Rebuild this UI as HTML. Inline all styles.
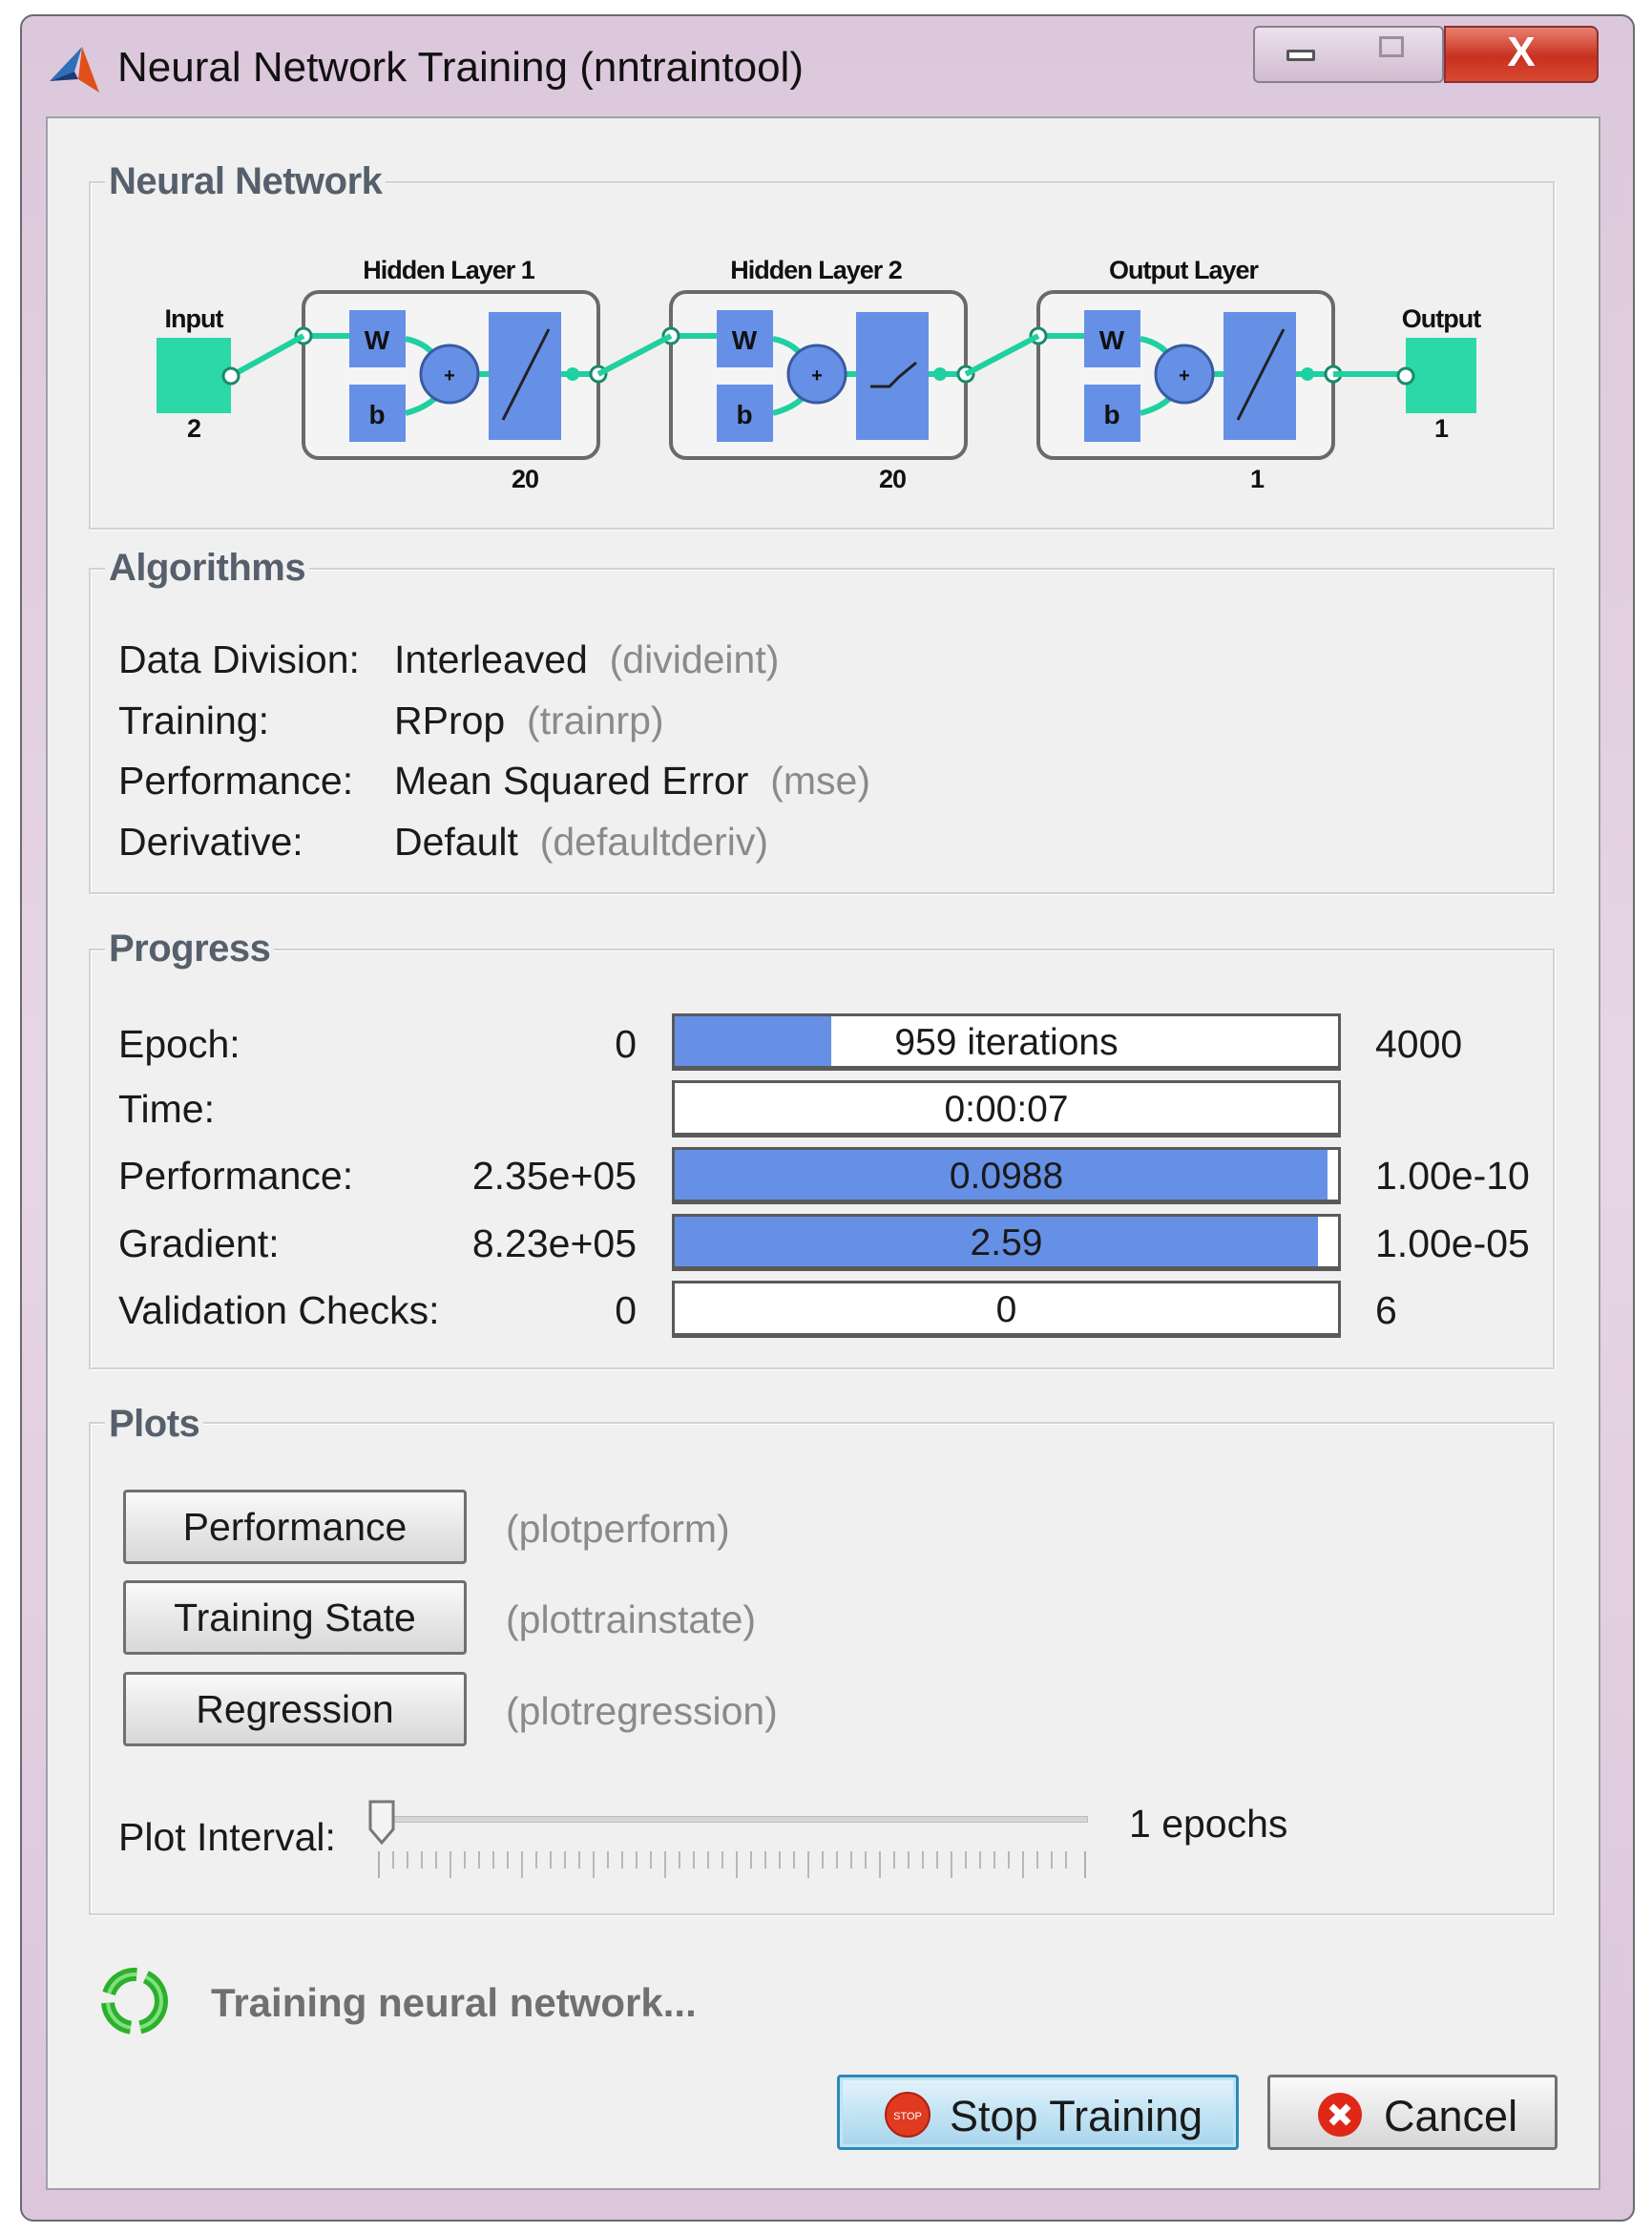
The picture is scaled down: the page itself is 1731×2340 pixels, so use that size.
<!DOCTYPE html>
<html><head><meta charset="utf-8"><style>
*{margin:0;padding:0;box-sizing:border-box}
body{width:1731px;height:2340px;background:#fff;position:relative;overflow:hidden;font-family:"Liberation Sans",sans-serif;color:#1a1a1a}
.a{position:absolute;white-space:nowrap}
.win{position:absolute;left:21px;top:15px;width:1692px;height:2313px;border:2px solid #6a6a70;border-radius:14px;background:linear-gradient(#dcc8dc,#e6d6e6 50%,#dcc6dc)}
.client{position:absolute;left:48px;top:122px;width:1629px;height:2173px;background:#f0f0f0;border:2px solid #a0a0a8}
.grp{position:absolute;border:2px solid #d2d2d2;box-shadow:inset 1px 1px 0 #fff,1px 1px 0 #fff}
.gl{position:absolute;background:#f0f0f0;color:#56606c;font-size:40px;font-weight:bold;letter-spacing:-0.5px;padding:0 4px;line-height:40px}
.t{font-size:41px;letter-spacing:0;line-height:40px}
.g{color:#8a8a8a}
.bar{position:absolute;left:704px;width:701px;height:60px;background:#fff;border:3px solid #5a5a5a;border-bottom-width:5px}
.fill{position:absolute;left:0;top:0;bottom:0;background:#6690e6}
.bt{position:absolute;left:50%;top:8px;transform:translateX(-50%);font-size:39px;line-height:40px}
.btn{position:absolute;left:129px;width:360px;height:78px;border:3px solid #707070;border-radius:4px;background:linear-gradient(#fafafa,#e8e8e8 50%,#d8d8d8);font-size:41px;text-align:center;line-height:72px}
</style></head><body>
<div class="win"></div>
<svg class="a" style="left:48px;top:45px" width="60" height="60" viewBox="0 0 60 60"><path d="M4 40 L30 30 L38 4 Z" fill="#2f6fb8"/><path d="M38 4 L56 52 L34 38 Z" fill="#e0501a"/><path d="M4 40 L30 30 L34 38 Z" fill="#1c3c78"/></svg>
<div class="a" style="left:123px;top:46px;font-size:44px;color:#111">Neural Network Training (nntraintool)</div>
<div class="a" style="left:1313px;top:27px;width:200px;height:60px;border:2px solid #8a7f90;border-radius:6px;background:linear-gradient(#ece0ec,#d0bcd0)"></div>
<div class="a" style="left:1348px;top:52px;width:30px;height:12px;border:3px solid #555;border-radius:2px;background:#fff"></div>
<div class="a" style="left:1445px;top:38px;width:26px;height:22px;border:3px solid #9a8fa0"></div>
<div class="a" style="left:1513px;top:27px;width:162px;height:60px;border:2px solid #8a3030;border-radius:0 8px 8px 0;background:linear-gradient(#e88070,#c83020 55%,#d84a30);color:#fff;font-size:44px;font-weight:bold;text-align:center;line-height:52px">X</div>
<div class="client"></div>

<div class="grp" style="left:93px;top:190px;width:1536px;height:365px"></div>
<div class="gl" style="left:110px;top:170px">Neural Network</div>
<svg class="a" style="left:0;top:0" width="1731" height="600" font-family="Liberation Sans,sans-serif" font-weight="bold">
<defs>
<g id="L">
<rect x="318" y="306" width="309" height="174" rx="16" fill="#f4f4f4" stroke="#6a6a6a" stroke-width="4"/>
<path d="M318 352 H366 M425 355 Q450 360 460 380 M425 433 Q455 425 465 405 M501 392 H512" stroke="#1fd0a0" stroke-width="6" fill="none"/>
<circle cx="318" cy="352" r="8" fill="#fff" stroke="#1a8a6a" stroke-width="3"/>
<rect x="366" y="325" width="59" height="60" fill="#6690e6"/><text x="395" y="366" text-anchor="middle" font-size="28" fill="#111">W</text>
<rect x="366" y="403" width="59" height="60" fill="#6690e6"/><text x="395" y="444" text-anchor="middle" font-size="28" fill="#111">b</text>
<circle cx="471" cy="392" r="30" fill="#6690e6" stroke="#3a5aa0" stroke-width="3"/><text x="471" y="400" text-anchor="middle" font-size="20" fill="#111">+</text>
<rect x="512" y="327" width="76" height="134" fill="#6690e6"/>
<path d="M588 392 H627" stroke="#1fd0a0" stroke-width="6"/>
<circle cx="600" cy="392" r="7" fill="#1fd0a0"/><circle cx="627" cy="392" r="8" fill="#fff" stroke="#1a8a6a" stroke-width="3"/>
</g></defs>
<use href="#L"/><use href="#L" x="385"/><use href="#L" x="770"/>
<path d="M527 440 L575 345" stroke="#222" stroke-width="3"/><path d="M1297 440 L1345 345" stroke="#222" stroke-width="3"/>
<path d="M912 405 L932 405 L942 395 L960 380" stroke="#222" stroke-width="3" fill="none"/>
<path d="M242 394 L318 352 M627 392 L703 352 M1012 392 L1088 352 M1397 392 H1473" stroke="#1fd0a0" stroke-width="6"/>
<rect x="164" y="354" width="78" height="79" fill="#2ad8a8"/>
<rect x="1473" y="354" width="74" height="79" fill="#2ad8a8"/>
<circle cx="242" cy="394" r="8" fill="#fff" stroke="#1a8a6a" stroke-width="3"/>
<circle cx="1473" cy="394" r="8" fill="#fff" stroke="#1a8a6a" stroke-width="3"/>
<g font-size="27" fill="#111" text-anchor="middle" letter-spacing="-1">
<text x="203" y="343">Input</text><text x="203" y="458">2</text>
<text x="1510" y="343">Output</text><text x="1510" y="458">1</text>
<text x="470" y="292">Hidden Layer 1</text><text x="855" y="292">Hidden Layer 2</text><text x="1240" y="292">Output Layer</text>
<text x="550" y="511">20</text><text x="935" y="511">20</text><text x="1317" y="511">1</text>
</g></svg>

<div class="grp" style="left:93px;top:595px;width:1536px;height:342px"></div>
<div class="gl" style="left:110px;top:575px">Algorithms</div>
<div class="a t" style="left:124px;top:671px">Data Division:</div><div class="a t" style="left:413px;top:671px">Interleaved &nbsp;<span class="g">(divideint)</span></div>
<div class="a t" style="left:124px;top:735px">Training:</div><div class="a t" style="left:413px;top:735px">RProp &nbsp;<span class="g">(trainrp)</span></div>
<div class="a t" style="left:124px;top:798px">Performance:</div><div class="a t" style="left:413px;top:798px">Mean Squared Error &nbsp;<span class="g">(mse)</span></div>
<div class="a t" style="left:124px;top:862px">Derivative:</div><div class="a t" style="left:413px;top:862px">Default &nbsp;<span class="g">(defaultderiv)</span></div>

<div class="grp" style="left:93px;top:994px;width:1536px;height:441px"></div>
<div class="gl" style="left:110px;top:974px">Progress</div>
<div class="a t" style="left:124px;top:1074px">Epoch:</div><div class="a t" style="left:600px;top:1074px;width:67px;text-align:right">0</div>
<div class="bar" style="top:1062px"><div class="fill" style="width:164px"></div><div class="bt">959 iterations</div></div>
<div class="a t" style="left:1441px;top:1074px">4000</div>
<div class="a t" style="left:124px;top:1142px">Time:</div>
<div class="bar" style="top:1132px"><div class="bt">0:00:07</div></div>
<div class="a t" style="left:124px;top:1212px">Performance:</div><div class="a t" style="left:467px;top:1212px;width:200px;text-align:right">2.35e+05</div>
<div class="bar" style="top:1202px"><div class="fill" style="width:684px"></div><div class="bt">0.0988</div></div>
<div class="a t" style="left:1441px;top:1212px">1.00e-10</div>
<div class="a t" style="left:124px;top:1283px">Gradient:</div><div class="a t" style="left:467px;top:1283px;width:200px;text-align:right">8.23e+05</div>
<div class="bar" style="top:1272px"><div class="fill" style="width:674px"></div><div class="bt">2.59</div></div>
<div class="a t" style="left:1441px;top:1283px">1.00e-05</div>
<div class="a t" style="left:124px;top:1353px">Validation Checks:</div><div class="a t" style="left:600px;top:1353px;width:67px;text-align:right">0</div>
<div class="bar" style="top:1342px"><div class="bt">0</div></div>
<div class="a t" style="left:1441px;top:1353px">6</div>

<div class="grp" style="left:93px;top:1490px;width:1536px;height:517px"></div>
<div class="gl" style="left:110px;top:1472px">Plots</div>
<div class="btn" style="top:1561px">Performance</div><div class="a t g" style="left:530px;top:1582px">(plotperform)</div>
<div class="btn" style="top:1656px">Training State</div><div class="a t g" style="left:530px;top:1677px">(plottrainstate)</div>
<div class="btn" style="top:1752px">Regression</div><div class="a t g" style="left:530px;top:1773px">(plotregression)</div>
<div class="a t" style="left:124px;top:1905px">Plot Interval:</div>
<div class="a" style="left:395px;top:1903px;width:745px;height:7px;background:#d6d6d6;border:1px solid #bdbdbd"></div>
<svg class="a" style="left:385px;top:1885px" width="30" height="50"><path d="M3 3 H27 V32 L15 46 L3 32 Z" fill="#f4f4f4" stroke="#777" stroke-width="3"/></svg>
<svg class="a" style="left:395px;top:1940px" width="750" height="30"><path d="M2 0 V28 M742 0 V28" stroke="#b0b0b0" stroke-width="2"/>
<path d="M17 0V18M32 0V18M47 0V18M62 0V18M77 0V28M92 0V18M107 0V18M122 0V18M137 0V18M152 0V28M167 0V18M182 0V18M197 0V18M212 0V18M227 0V28M242 0V18M257 0V18M272 0V18M287 0V18M302 0V28M317 0V18M332 0V18M347 0V18M362 0V18M377 0V28M392 0V18M407 0V18M422 0V18M437 0V18M452 0V28M467 0V18M482 0V18M497 0V18M512 0V18M527 0V28M542 0V18M557 0V18M572 0V18M587 0V18M602 0V28M617 0V18M632 0V18M647 0V18M662 0V18M677 0V28M692 0V18M707 0V18M722 0V18" stroke="#b8b8b8" stroke-width="2"/></svg>
<div class="a t" style="left:1183px;top:1891px">1 epochs</div>

<svg class="a" style="left:102px;top:2057px" width="78" height="80" viewBox="0 0 78 80"><circle cx="39" cy="40" r="28" fill="none" stroke="#2cb02c" stroke-width="14" stroke-dasharray="38 10"/><circle cx="39" cy="40" r="28" fill="none" stroke="#7ee07e" stroke-width="4" stroke-dasharray="38 10"/></svg>
<div class="a" style="left:221px;top:2075px;font-size:42px;font-weight:bold;color:#707070">Training neural network...</div>

<div class="a" style="left:877px;top:2174px;width:421px;height:79px;border:3px solid #2a8ab8;border-radius:4px;background:linear-gradient(#e4f4fc,#c4e4f4 50%,#a8d4ec);box-shadow:inset 0 0 0 3px #bfe4f4"></div>
<svg class="a" style="left:925px;top:2190px" width="52" height="52"><circle cx="26" cy="26" r="23" fill="#e03a20" stroke="#b02010" stroke-width="2"/><text x="26" y="31" text-anchor="middle" font-size="11" fill="#fff" font-family="Liberation Sans">STOP</text></svg>
<div class="a" style="left:995px;top:2192px;font-size:45px">Stop Training</div>
<div class="a" style="left:1328px;top:2174px;width:304px;height:79px;border:3px solid #707070;border-radius:4px;background:linear-gradient(#fafafa,#e8e8e8 50%,#d6d6d6)"></div>
<svg class="a" style="left:1378px;top:2190px" width="52" height="52"><circle cx="26" cy="26" r="23" fill="#e02818"/><path d="M17 17 L35 35 M35 17 L17 35" stroke="#fff" stroke-width="7"/></svg>
<div class="a" style="left:1450px;top:2192px;font-size:45px">Cancel</div>
</body></html>
